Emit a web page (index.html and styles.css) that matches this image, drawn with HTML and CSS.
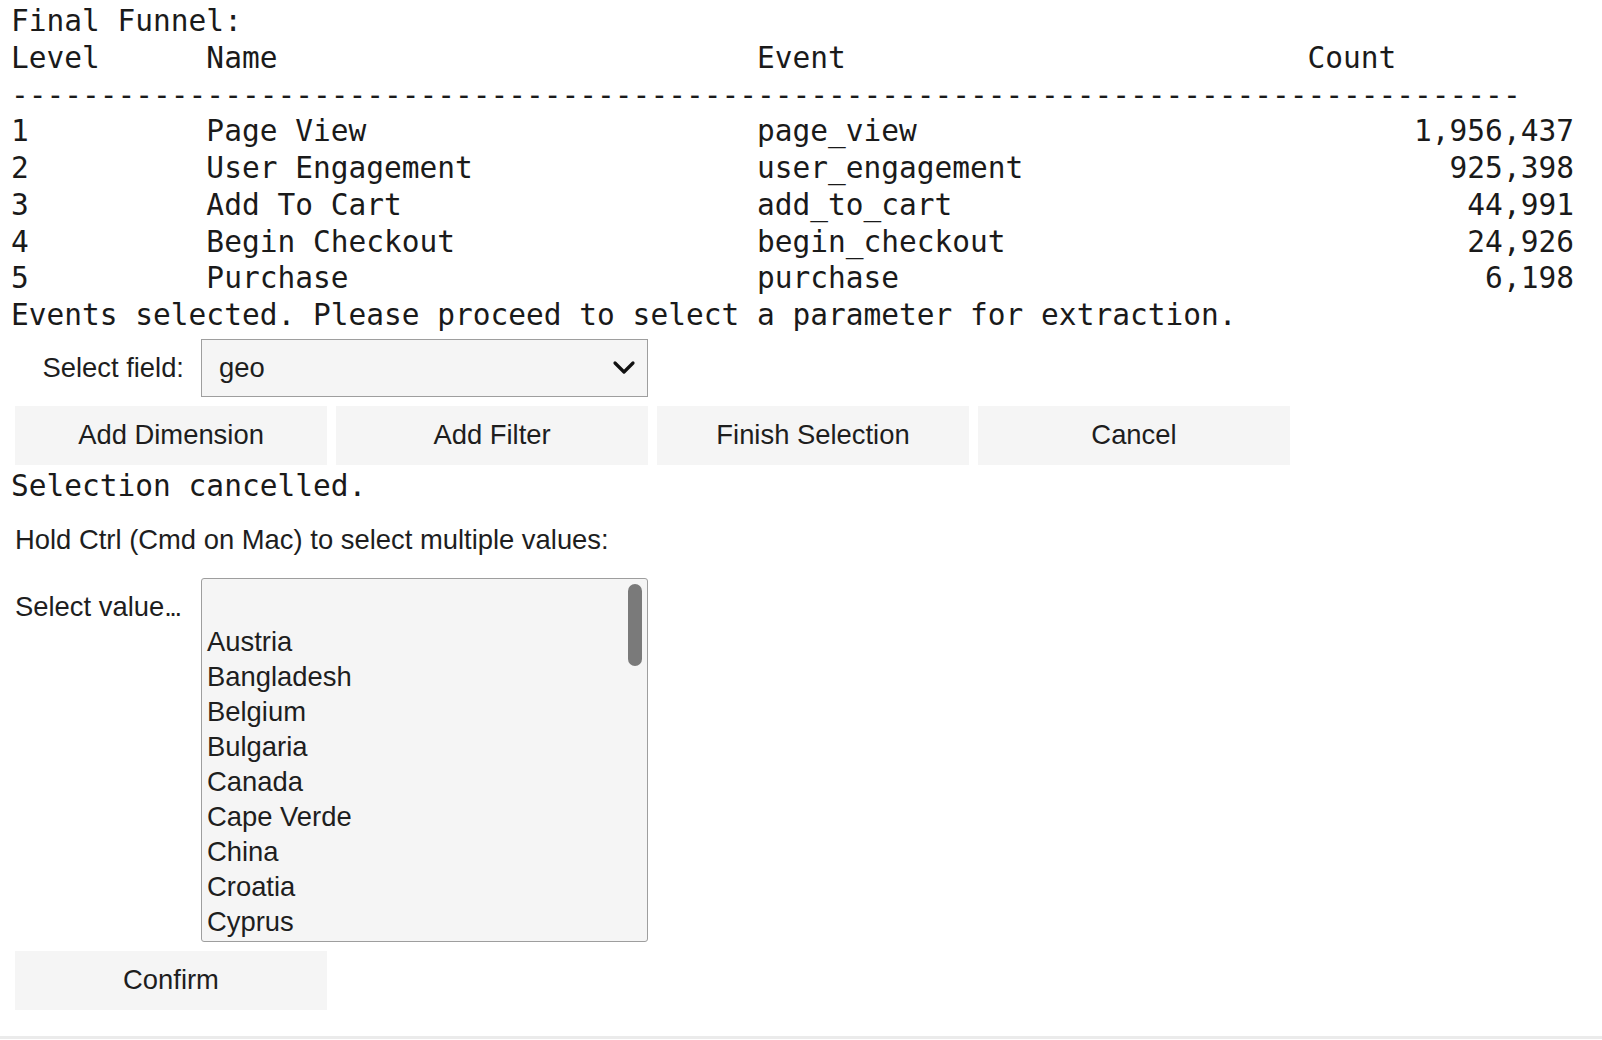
FILE: index.html
```html
<!DOCTYPE html>
<html>
<head>
<meta charset="utf-8">
<link rel="stylesheet" href="styles.css">
</head>
<body>
<div class="cell">
<pre class="out">Final Funnel:
Level      Name                           Event                          Count
-------------------------------------------------------------------------------------
1          Page View                      page_view                            1,956,437
2          User Engagement                user_engagement                        925,398
3          Add To Cart                    add_to_cart                             44,991
4          Begin Checkout                 begin_checkout                          24,926
5          Purchase                       purchase                                 6,198
Events selected. Please proceed to select a parameter for extraction.</pre>

<div class="field-row">
  <label class="desc">Select field:</label>
  <div class="dropdown">
    <span class="dd-value">geo</span>
    <svg class="chev" width="24" height="16" viewBox="0 0 24 16"><path d="M3 3 L12 12 L21 3" fill="none" stroke="#111" stroke-width="3.2" stroke-linecap="round" stroke-linejoin="round"/></svg>
  </div>
</div>

<div class="btn-row">
  <button class="btn">Add Dimension</button>
  <button class="btn">Add Filter</button>
  <button class="btn">Finish Selection</button>
  <button class="btn">Cancel</button>
</div>

<pre class="out msg">Selection cancelled.</pre>

<div class="hint">Hold Ctrl (Cmd on Mac) to select multiple values:</div>

<div class="value-row">
  <label class="desc2">Select value<span class="dots">...</span></label>
  <div class="listbox">
    <div class="opts">
      <div class="opt">&nbsp;</div>
      <div class="opt">Austria</div>
      <div class="opt">Bangladesh</div>
      <div class="opt">Belgium</div>
      <div class="opt">Bulgaria</div>
      <div class="opt">Canada</div>
      <div class="opt">Cape Verde</div>
      <div class="opt">China</div>
      <div class="opt">Croatia</div>
      <div class="opt">Cyprus</div>
    </div>
    <div class="thumb"></div>
  </div>
</div>

<div class="btn-row single">
  <button class="btn">Confirm</button>
</div>
</div>
<div class="rule"></div>
</body>
</html>
```
FILE: styles.css
```css
html, body {
  margin: 0;
  padding: 0;
  background: #ffffff;
}

.cell {
  padding: 3px 0 0 11px;
  height: 1036px;
  box-sizing: border-box;
}

.out {
  margin: 0;
  font-family: "DejaVu Sans Mono", monospace;
  font-size: 29.5px;
  line-height: 36.75px;
  color: #1a1a1a;
  white-space: pre;
}

.field-row {
  display: flex;
  align-items: center;
  margin-top: 5px;
  height: 58px;
}

.desc {
  width: 173px;
  padding-right: 17px;
  text-align: right;
  font-family: "Liberation Sans", Arial, sans-serif;
  font-size: 27.4px;
  color: #1e1e1e;
}

.dropdown {
  position: relative;
  box-sizing: border-box;
  width: 447px;
  height: 58px;
  border: 1.5px solid #9e9e9e;
  background: #f5f5f5;
  display: flex;
  align-items: center;
  padding-left: 17px;
  font-family: "Liberation Sans", Arial, sans-serif;
  font-size: 27.4px;
  color: #1e1e1e;
}

.chev {
  position: absolute;
  right: 11px;
  top: 20px;
}

.btn-row {
  display: flex;
  gap: 9px;
  margin-top: 9px;
  margin-left: 4px;
}

.btn {
  width: 312px;
  height: 59px;
  border: none;
  background: #f5f5f5;
  font-family: "Liberation Sans", Arial, sans-serif;
  font-size: 27.4px;
  color: #1e1e1e;
  padding: 0;
}

.msg {
  margin-top: 3px;
}

.hint {
  margin-top: 6px;
  margin-left: 4px;
  height: 58px;
  line-height: 58px;
  font-family: "Liberation Sans", Arial, sans-serif;
  font-size: 27.4px;
  color: #1e1e1e;
}

.value-row {
  display: flex;
  align-items: flex-start;
  margin-top: 9px;
}

.desc2 {
  width: 186px;
  padding-left: 4px;
  height: 58px;
  line-height: 58px;
  font-family: "Liberation Sans", Arial, sans-serif;
  font-size: 27.4px;
  color: #1e1e1e;
  white-space: nowrap;
}

.dots {
  letter-spacing: -2.5px;
}

.listbox {
  position: relative;
  box-sizing: border-box;
  width: 447px;
  height: 364px;
  border: 1.5px solid #9e9e9e;
  border-radius: 3px;
  background: #f5f5f5;
  overflow: hidden;
}

.opts {
  padding-top: 10px;
  padding-left: 5px;
}

.opt {
  height: 35px;
  line-height: 35px;
  font-family: "Liberation Sans", Arial, sans-serif;
  font-size: 27.4px;
  color: #1e1e1e;
}

.thumb {
  position: absolute;
  right: 5px;
  top: 5px;
  width: 14px;
  height: 82px;
  border-radius: 7px;
  background: #7a7a7a;
}

.single {
  margin-top: 9px;
}

.rule {
  height: 3px;
  background: #ebebeb;
}
```
